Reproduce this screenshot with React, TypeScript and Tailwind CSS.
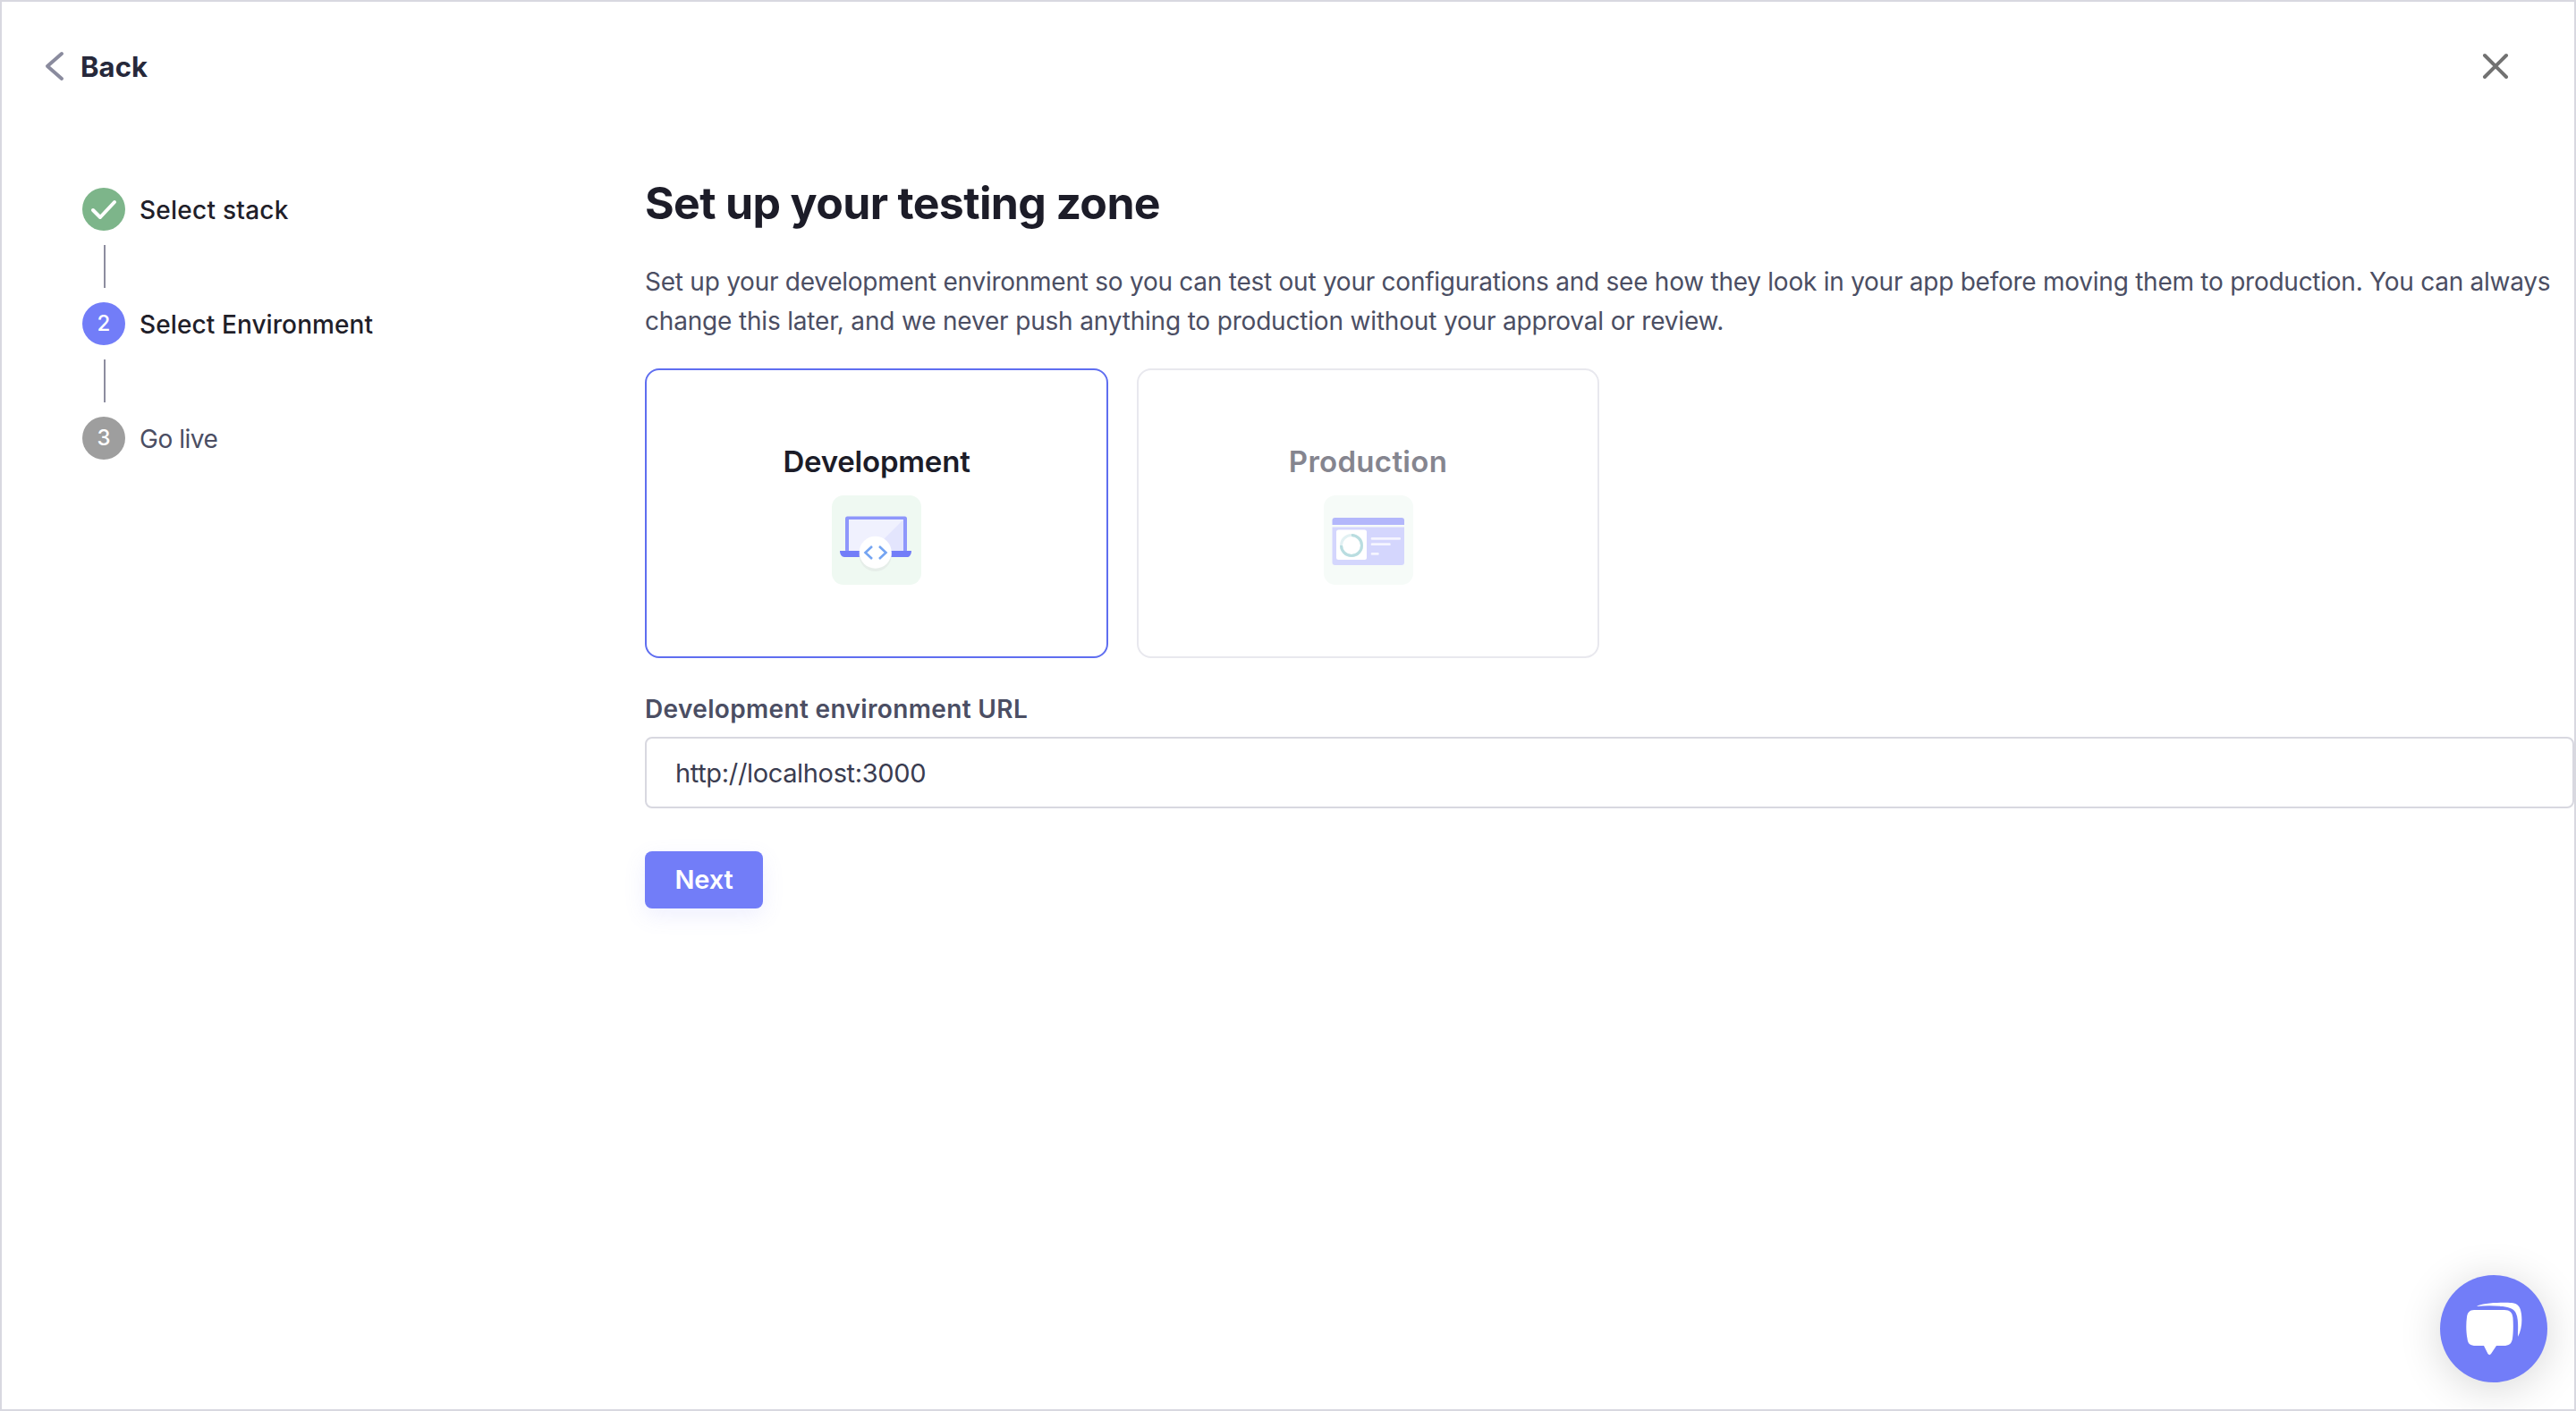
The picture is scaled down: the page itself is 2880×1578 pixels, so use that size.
import React from "react";

const font = "font-['Inter','Liberation_Sans',sans-serif]";

function Line() {
  return <div className="ml-[24px] my-[16px] h-[48px] w-[2px] bg-[#8d8d9f]" />;
}

function Step({ bg, children, label, labelClass }: { bg: string; children: React.ReactNode; label: string; labelClass: string }) {
  return (
    <div className="flex items-center gap-[16px] h-[48px]">
      <div className={`flex h-[48px] w-[48px] items-center justify-center rounded-full text-[24px] font-medium text-white ${bg}`}>{children}</div>
      <span className={`pt-[1px] text-[28px] ${labelClass}`}>{label}</span>
    </div>
  );
}

function Laptop() {
  return (
    <svg viewBox="0 0 100 100" className="h-[100px] w-[100px]">
      <rect width="100" height="100" rx="13" fill="#eff9f2" />
      <rect x="15" y="23.5" width="69" height="40" rx="2.5" fill="#8e97fb" />
      <rect x="19" y="27" width="61" height="36" fill="#f0f1fe" />
      <path d="M80 27V62H45Z" fill="#e3e5fd" />
      <path d="M9 62H89C89 66 87 69 84 69H14C11 69 9 66 9 62Z" fill="#727df8" />
      <circle cx="48.7" cy="67" r="18" fill="#e6eee9" />
      <circle cx="48.7" cy="63.7" r="18" fill="#ffffff" />
      <path d="M45 57L37.5 64L45 71" fill="none" stroke="#74a4f2" strokeWidth="2.6" />
      <path d="M53 57L60.5 64L53 71" fill="none" stroke="#74a4f2" strokeWidth="2.6" />
    </svg>
  );
}

function Dashboard() {
  return (
    <svg viewBox="0 0 100 100" className="h-[100px] w-[100px]">
      <rect width="100" height="100" rx="13" fill="#f6fbf8" />
      <path d="M9.5 28a3 3 0 0 1 3-3H87a3 3 0 0 1 3 3V33H9.5Z" fill="#b3b7fb" />
      <path d="M9.5 35.5H90V75a3 3 0 0 1-3 3H12.5a3 3 0 0 1-3-3Z" fill="#d4d6fd" />
      <rect x="14" y="38.5" width="34" height="33.5" rx="2.5" fill="#ffffff" />
      <circle cx="31" cy="56" r="11.5" fill="none" stroke="#e2f1f3" strokeWidth="3" />
      <path d="M31 44.5A11.5 11.5 0 1 1 19.5 56" fill="none" stroke="#b9dde0" strokeWidth="3" />
      <rect x="52.7" y="47" width="33.3" height="2.8" rx="1.2" fill="#f5f5ff" />
      <rect x="52.7" y="53.3" width="22" height="2.8" rx="1.2" fill="#f5f5ff" />
      <rect x="52.7" y="64" width="9" height="2.8" rx="1.2" fill="#f5f5ff" />
    </svg>
  );
}

export default function App() {
  return (
    <div className={`relative flex h-[1578px] w-[2880px] flex-col overflow-hidden border-2 border-[#d8d8e0] bg-white ${font}`}>
      <header className="flex h-[146px] items-start justify-between pl-[48px] pr-[32px] pt-[50px]">
        <div className="flex h-[44px] items-center gap-[18px] text-[31px] font-bold leading-none text-[#26283a]">
          <svg viewBox="0 0 22 34" className="h-[34px] w-[22px]" fill="none" stroke="#8a8b9e" strokeWidth="4" strokeLinecap="round" strokeLinejoin="round">
            <path d="M19 3L3 17L19 31" />
          </svg>
          <span className="tracking-[0.1px]">Back</span>
        </div>
        <svg viewBox="0 0 30 30" className="mr-[41px] mt-[7px] h-[30px] w-[30px]" fill="none" stroke="#727272" strokeWidth="4" strokeLinecap="round">
          <path d="M3 3L27 27M27 3L3 27" />
        </svg>
      </header>
      <div className="flex flex-1">
        <aside className="w-[719px] shrink-0 pl-[90px] pt-[62px]">
          <Step bg="bg-[#7db58a]" label="Select stack" labelClass="text-[#1f2029] font-medium tracking-[0.25px]">
            <svg viewBox="0 0 30 24" className="h-[24px] w-[30px]" fill="none" stroke="#ffffff" strokeWidth="4" strokeLinecap="round" strokeLinejoin="round">
              <path d="M3 13L11 21L27 4" />
            </svg>
          </Step>
          <Line />
          <Step bg="bg-[#727df8]" label="Select Environment" labelClass="text-[#1f2029] font-medium tracking-[0.1px]">2</Step>
          <Line />
          <Step bg="bg-[#9e9e9e]" label="Go live" labelClass="text-[#4b4e63] tracking-[-0.45px]">3</Step>
        </aside>
        <main className="min-w-0 flex-1">
          <h1 className="mt-[49px] text-[50px] font-bold leading-[60px] tracking-[-0.65px] text-[#1c1c28]">Set up your testing zone</h1>
          <p className="mt-[36px] text-[28px] leading-[44px] text-[#4b4e63]">
            <span className="tracking-[-0.25px]">Set up your development environment so you can test out your configurations and see how they look in your app before moving them to production. You can always</span>
            <br />
            <span className="tracking-[-0.18px]">change this later, and we never push anything to production without your approval or review.</span>
          </p>
          <div className="mt-[31px] flex gap-[32px]">
            <div className="flex h-[324px] w-[518px] flex-col items-center rounded-[16px] border-2 border-[#5f6ef0] pt-[82px]">
              <span className="text-[33px] font-semibold leading-[40px] tracking-[-0.2px] text-[#1c1c28]">Development</span>
              <div className="mt-[18px]"><Laptop /></div>
            </div>
            <div className="flex h-[324px] w-[517px] flex-col items-center rounded-[16px] border-2 border-[#e8e8ee] pt-[82px]">
              <span className="text-[33px] font-semibold leading-[40px] tracking-[0.3px] text-[#85858f]">Production</span>
              <div className="mt-[18px]"><Dashboard /></div>
            </div>
          </div>
          <label className="mt-[39px] block text-[28px] font-semibold leading-[36px] tracking-[0.35px] text-[#4b4e63]">Development environment URL</label>
          <input
            readOnly
            value="http://localhost:3000"
            className="mt-[13px] block h-[80px] w-full rounded-[8px] border-2 border-[#d8d8e0] bg-white px-[32px] text-[29px] tracking-[-0.35px] text-[#3a3c50] outline-none"
          />
          <button className="mt-[48px] block h-[64px] w-[132px] rounded-[8px] bg-[#727df8] text-[29px] font-semibold tracking-[-0.2px] text-white shadow-[0_8px_24px_rgba(114,125,248,0.12)]">Next</button>
        </main>
      </div>
      <button className="absolute bottom-[30px] right-[30px] flex h-[120px] w-[120px] items-center justify-center rounded-full bg-[#727df8] shadow-[0_6px_48px_rgba(0,0,0,0.16)]">
        <svg viewBox="0 0 120 120" className="h-[120px] w-[120px]" fill="#ffffff">
          <path d="M41 35C46 31 70 30 80 31C88 32 90 36 91 44C92 53 91 62 87 69C87 60 88 50 85 43C83 38 78 36 70 35C60 34 50 34 41 35Z" />
          <path d="M38 39H72C78 39 81 42 81.5 48C82 55 82 64 81 71C80 77 77 79 71 79H63L57 88C56 89.5 54.5 89.5 53.5 88L49 79H40C34 79 31 77 30.5 71C29 63 29 54 30 47C30.5 42 33 39 38 39Z" />
        </svg>
      </button>
    </div>
  );
}
